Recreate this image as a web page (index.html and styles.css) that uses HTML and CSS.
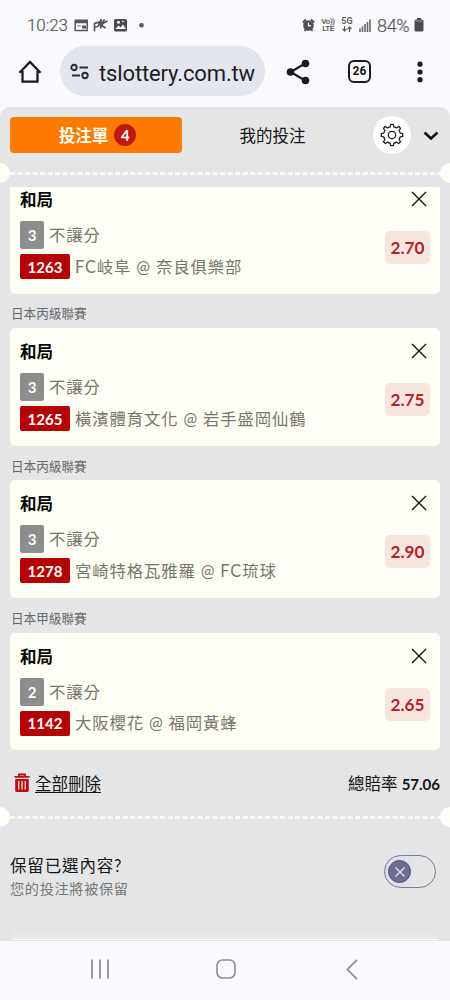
FILE: index.html
```html
<!DOCTYPE html>
<html lang="zh-Hant">
<head>
<meta charset="utf-8">
<title>投注單</title>
<link rel="stylesheet" href="styles.css">
</head>
<body>
<div class="phone">
  <header class="status">
    <span class="clock">10:23</span>
    <svg class="status-left" width="76" height="16" viewBox="0 0 76 16">
      <path d="M1.200 3.200h12v10.300h-12z" fill="none" stroke="#555558" stroke-width="1.500"/>
      <path d="M1 3h12.500v3.200H1zM8 8.500h4v3H8z" fill="#555558"/><path d="M3 9h4" stroke="#77777a"/>
      <path d="M20.500 14.500V6.500q4.500-2 4.500.8t-4.500 2.700" fill="none" stroke="#555558" stroke-width="1.700"/>
      <path d="M27 2l-.3 9.500M33.500 4q-4 1.500-6.500 4l4.500 3M27 7.500l3.500-5M25 4l2 4" fill="none" stroke="#555558" stroke-width="1.800"/>
      <rect x="40" y="2" width="13" height="12.500" rx="1.500" fill="#4b4b4e"/>
      <path d="M41.500 12l3-3.500 2 2L49 7.500l3 4.500z" fill="#faf9fe"/><circle cx="44.500" cy="5.300" r="1.500" fill="#faf9fe"/><path d="M49 3.500v2M48 4.500h2" stroke="#d0d0d3"/>
      <circle cx="67.500" cy="8.300" r="2.300" fill="#555558"/>
    </svg>
    <div class="status-right">
      <svg width="13" height="14" viewBox="0 0 13 14"><circle cx="6.500" cy="7.500" r="5.300" fill="#4f4f52"/><path d="M.8 4.500L4 1.500M12.200 4.500L9 1.500M2.500 13l1.500-2M10.500 13L9 11" stroke="#4f4f52" stroke-width="1.800"/><path d="M6.500 4.500v3.300h2.600" stroke="#faf9fe" stroke-width="1.200" fill="none"/></svg>
      <span class="net volte"><b>Vo))</b><b>LTE</b></span>
      <span class="net fiveg"><b>5G</b><svg width="10" height="6" viewBox="0 0 10 6"><path d="M2.500 0v5M.5 3l2 2 2-2M7.500 6V1M5.500 3l2-2 2 2" fill="none" stroke="#555558" stroke-width="1.100"/></svg></span>
      <svg class="signal" width="12" height="13" viewBox="0 0 12 13"><path d="M1 9.500V13M3.500 7.500V13M6 5V13M8.500 3V13M11 .5V13" stroke="#69696c" stroke-width="1.600"/></svg>
      <span class="percent">84%</span>
      <svg class="battery" width="10" height="14" viewBox="0 0 10 14"><path d="M3 0h4v1.500h1Q9.500 1.500 9.500 3v9q0 1.500-1.500 1.500H2Q.5 13.500.5 12V3Q.5 1.500 2 1.500h1z" fill="#4b4b4e"/><path d="M1.500 3h7" stroke="#a0a0a3"/></svg>
    </div>
  </header>

  <div class="browser-bar">
    <svg class="home" width="24" height="24" viewBox="0 0 24 24"><path d="M4.500 11v10.700h15V11M1.500 12.700L12 2l10.500 10.700" fill="none" stroke="#1b1b20" stroke-width="2.300"/></svg>
    <div class="address">
      <svg width="20" height="18" viewBox="0 0 20 18"><g fill="none" stroke="#2a2b31" stroke-width="1.900"><circle cx="4" cy="4.500" r="2.700"/><path d="M9.500 4.500H18M2 12.500h8"/><circle cx="15" cy="12.500" r="2.700"/></g></svg>
      <span>tslottery.com.tw</span>
    </div>
    <svg class="share" width="24" height="26" viewBox="0 0 24 26"><path d="M20 4L4.500 13 20 22" fill="none" stroke="#1b1b20" stroke-width="2.100"/><circle cx="19.500" cy="4.500" r="3.800" fill="#1b1b20"/><circle cx="4.500" cy="13" r="3.800" fill="#1b1b20"/><circle cx="19.500" cy="21.500" r="3.800" fill="#1b1b20"/></svg>
    <span class="tab-count">26</span>
    <svg class="more" width="6" height="22" viewBox="0 0 6 22"><g fill="#1b1b20"><circle cx="3" cy="3.200" r="2.600"/><circle cx="3" cy="11" r="2.600"/><circle cx="3" cy="18.700" r="2.600"/></g></svg>
  </div>

  <main class="sheet">
    <div class="tabs">
      <div class="tab active">投注單<span class="count">4</span></div>
      <div class="tab">我的投注</div>
      <div class="gear"><svg width="26" height="26" viewBox="0 0 26 26"><path fill="none" stroke="#222" stroke-width="1.300" stroke-linejoin="round" d="M11.200 4.800 L11.700 2.300H14.300L14.800 4.800Q16.300 5.200 17.500 5.900L19.700 4.500L21.500 6.300L20.100 8.500Q20.900 9.700 21.200 11.200L23.700 11.700V14.300L21.200 14.800Q20.900 16.300 20.100 17.500L21.500 19.700L19.700 21.500L17.500 20.100Q16.300 20.900 14.800 21.200L14.300 23.700H11.700L11.200 21.200Q9.700 20.900 8.500 20.100L6.300 21.500L4.500 19.700L5.900 17.500Q5.100 16.300 4.800 14.800L2.300 14.300V11.700L4.800 11.200Q5.100 9.700 5.900 8.500L4.500 6.300L6.300 4.500L8.500 5.900Q9.700 5.100 11.200 4.800Z"/><circle cx="13" cy="13" r="3.700" fill="none" stroke="#222" stroke-width="1.300"/></svg></div>
      <svg class="chevron" width="16" height="10" viewBox="0 0 16 10"><path d="M1.500 1.500L8 7.500l6.500-6" fill="none" stroke="#111" stroke-width="2.700"/></svg>
    </div>
    <div class="tear"><svg width="430" height="3" viewBox="0 0 430 3"><path d="M0 1.500H430" stroke="#fffef6" stroke-width="2.400" stroke-dasharray="5.200 2.300"/></svg></div>

    <section class="bets">
      <article class="card">
        <div class="card-head"><h2>和局</h2><svg class="close" width="16" height="16" viewBox="0 0 16 16"><path d="M1 1l14 14M15 1L1 15"/></svg></div>
        <div class="line market"><span class="num">3</span><span class="label">不讓分</span></div>
        <div class="line match"><span class="code">1263</span><span class="label">FC岐阜 @ 奈良俱樂部</span></div>
        <span class="odds">2.70</span>
      </article>
      <div class="league">日本丙級聯賽</div>
      <article class="card">
        <div class="card-head"><h2>和局</h2><svg class="close" width="16" height="16" viewBox="0 0 16 16"><path d="M1 1l14 14M15 1L1 15"/></svg></div>
        <div class="line market"><span class="num">3</span><span class="label">不讓分</span></div>
        <div class="line match"><span class="code">1265</span><span class="label">橫濱體育文化 @ 岩手盛岡仙鶴</span></div>
        <span class="odds">2.75</span>
      </article>
      <div class="league">日本丙級聯賽</div>
      <article class="card">
        <div class="card-head"><h2>和局</h2><svg class="close" width="16" height="16" viewBox="0 0 16 16"><path d="M1 1l14 14M15 1L1 15"/></svg></div>
        <div class="line market"><span class="num">3</span><span class="label">不讓分</span></div>
        <div class="line match"><span class="code">1278</span><span class="label">宮崎特格瓦雅羅 @ FC琉球</span></div>
        <span class="odds">2.90</span>
      </article>
      <div class="league">日本甲級聯賽</div>
      <article class="card">
        <div class="card-head"><h2>和局</h2><svg class="close" width="16" height="16" viewBox="0 0 16 16"><path d="M1 1l14 14M15 1L1 15"/></svg></div>
        <div class="line market"><span class="num">2</span><span class="label">不讓分</span></div>
        <div class="line match"><span class="code">1142</span><span class="label">大阪櫻花 @ 福岡黃蜂</span></div>
        <span class="odds">2.65</span>
      </article>
    </section>

    <div class="summary">
      <svg width="16" height="20" viewBox="0 0 16 20"><path d="M5 3V1.500h6V3M.5 3.800h15" fill="none" stroke="#b90d12" stroke-width="1.800"/><path d="M1.200 6h13.600v11.500q0 1.500-1.500 1.500H2.700q-1.500 0-1.500-1.500z" fill="#b90d12"/><path d="M4.700 8v8.500M8 8v8.500M11.300 8v8.500" stroke="#eed9da" stroke-width="1.300"/></svg>
      <span class="clear">全部刪除</span>
      <span class="total">總賠率 <b>57.06</b></span>
    </div>
    <div class="tear"><svg width="430" height="3" viewBox="0 0 430 3"><path d="M0 1.500H430" stroke="#fffef6" stroke-width="2.400" stroke-dasharray="5.200 2.300"/></svg></div>

    <div class="keep">
      <div><div class="keep-title">保留已選內容?</div><div class="keep-note">您的投注將被保留</div></div>
      <div class="toggle"><span class="knob"><svg width="12" height="12" viewBox="0 0 12 12"><path d="M1.500 1.500l9 9M10.500 1.500l-9 9" stroke="#e6e6f4" stroke-width="1.300"/></svg></span></div>
    </div>
    <div class="next-panel"></div>
  </main>

  <nav class="system-nav">
    <svg width="20" height="20" viewBox="0 0 20 20"><path d="M2 .5v19M10 .5v19M18 .5v19" stroke="#919195" stroke-width="1.800"/></svg>
    <svg width="20" height="20" viewBox="0 0 20 20"><rect x="1" y="1" width="18" height="18" rx="5.500" fill="none" stroke="#919195" stroke-width="1.700"/></svg>
    <svg width="12" height="21" viewBox="0 0 12 21"><path d="M11 .8L1.200 10.500 11 20.200" fill="none" stroke="#919195" stroke-width="1.800"/></svg>
  </nav>
</div>
</body>
</html>
```
FILE: styles.css
```css
* { box-sizing: border-box; }
body { margin: 0; background: #faf9fe; font-family: Lato, "Noto Sans CJK TC", sans-serif; color: #151515; }
svg { display: block; flex: none; }
.phone { width: 450px; height: 1000px; display: flex; flex-direction: column; overflow: hidden; }

.status { height: 46px; padding: 4px 25px 0 27px; display: flex; align-items: center; font-family: Roboto, sans-serif; color: #58585b; }
.clock { font-size: 17px; width: 41px; margin-right: 6px; font-weight: 300; -webkit-text-stroke: .2px #58585b; letter-spacing: -.1px; white-space: nowrap; }
.status-right { margin-left: auto; display: flex; align-items: center; }
.net { display: flex; flex-direction: column; align-items: center; font-size: 8px; line-height: 7px; font-weight: 600; }
.net b { font-weight: 600; }
.volte { width: 14px; margin-left: 6px; letter-spacing: -.4px; }
.fiveg { width: 12px; margin-left: 6px; gap: 1px; font-size: 9px; }
.signal { margin-left: 6px; }
.percent { width: 37px; margin-left: 6px; font-size: 18px; letter-spacing: -.3px; font-weight: 300; -webkit-text-stroke: .2px #58585b; }
.battery { margin-right: 1px; }

.browser-bar { height: 61px; padding-left: 18px; display: flex; align-items: flex-start; }
.home { margin-top: 14px; }
.address { width: 205px; height: 50px; margin: 0 0 0 18px; padding-left: 10px; border-radius: 25px; background: #e3e5ef; display: flex; align-items: center; font: 22px/50px Roboto, sans-serif; color: #1c1d24; }
.address span { margin-left: 9px; letter-spacing: -.13px; padding-top: 5px; }
.address svg { margin-top: 1px; }
.share { margin: 13px 0 0 21px; }
.tab-count { width: 23px; height: 23px; margin: 14px 0 0 38px; border: 2.400px solid #1b1b20; border-radius: 6px; font: 700 12px/19px Roboto, sans-serif; text-align: center; }
.more { margin: 15px 0 0 46px; }

.sheet { height: 834px; background: #e3e5e7; border-radius: 10px 10px 0 0; display: flex; flex-direction: column; overflow: hidden; }
.tabs { height: 56px; padding: 10px 10px 0; display: flex; align-items: flex-start; }
.tab { width: 172px; height: 36px; display: flex; align-items: center; justify-content: center; font-size: 16.500px; }
.tab + .tab { width: 181px; }
.tab.active { background: #ff7b00; color: #fffef2; border-radius: 4px; padding: 0 0 0 3px; font-weight: 700; }
.count { width: 22px; height: 22px; margin-left: 6px; border-radius: 50%; background: #bd1811; font-size: 15px; line-height: 22px; text-align: center; }
.gear { width: 38px; height: 38px; margin-top: -1px; border-radius: 50%; background: #fff; display: flex; align-items: center; justify-content: center; margin-left: 10px; }
.chevron { margin: 14px 0 0 12px; }
.tear { height: 20px; margin: 0 -10px; display: flex; align-items: center; justify-content: space-between; flex: none; }
.tear::before, .tear::after { content: ""; width: 20px; height: 20px; border-radius: 50%; background: #fffef6; flex: none; }

.bets { height: 567px; margin-top: 4px; padding: 0 10px; overflow: hidden; flex: none; }
.card { height: 117.500px; padding: 11px 10px 0; border-radius: 5px; background: #fffef4; display: grid; grid-template: 34px 33px 25px / 1fr 45px; }
.bets > .card:first-child { margin-top: -11px; }
.card-head { grid-column: 1 / 3; display: flex; justify-content: space-between; padding: 0 3px 0 0; }
.card-head h2 { margin: 0; padding-top: 1px; font-size: 16.500px; line-height: 24px; font-weight: 700; color: #050505; }
.close { margin-top: 4px; fill: none; stroke: #151515; stroke-width: 1.400; }
.line { grid-column: 1; display: flex; align-items: center; gap: 5px; font-size: 16.400px; letter-spacing: .85px; color: #777770; white-space: nowrap; }
.label { padding-bottom: 2px; }
.market { height: 28px; }
.match { height: 25px; }
.num, .code { display: flex; align-items: center; justify-content: center; border-radius: 2px; color: #fffef6; font-weight: 700; font-size: 15px; letter-spacing: 0; }
.num { width: 24px; height: 28px; background: #8d8d8d; }
.code { width: 50px; height: 25px; background: #b40004; }
.odds { grid-column: 2; grid-row: 2 / 4; height: 33px; margin-top: 10px; border-radius: 5px; background: #f6e6df; color: #b5252a; font-weight: 700; font-size: 17.200px; line-height: 33px; text-align: center; }
.league { height: 34.700px; padding: 4px 0 0 1px; display: flex; align-items: center; font-size: 12.600px; color: #68696b; }

.summary { height: 53px; padding: 15px 10px 0 14px; display: flex; align-items: flex-start; flex: none; font-size: 16.500px; line-height: 24px; }
.summary svg { margin-top: 4px; }
.clear { margin: 3px 0 0 5px; height: 23px; text-decoration: underline; text-underline-offset: 2px; }
.total { margin: 3px 0 0 auto; }
.total b { font-size: 15px; }
.keep { padding: 27px 14px 0 10px; display: flex; justify-content: space-between; }
.keep-title { font-size: 16.500px; line-height: 24px; letter-spacing: .85px; }
.keep-note { font-size: 14.200px; line-height: 22px; letter-spacing: .65px; color: #777879; }
.toggle { width: 52px; height: 33px; margin-top: 1px; padding-left: 3px; display: flex; align-items: center; border: 1.500px solid #777a8c; border-radius: 17px; background: linear-gradient(90deg, #dddff0 35%, #e3e5e7 60%); }
.knob { width: 23px; height: 23px; border: 1.500px solid #505475; border-radius: 50%; background: #6b6e8c; display: flex; align-items: center; justify-content: center; }
.next-panel { height: 12px; margin: auto 12px 1px; border-bottom: 1.500px solid #fff; background: linear-gradient(#e3e5e7, #e8e9eb); }

.system-nav { height: 59px; padding: 0 92px 3px 90px; display: grid; grid-template-columns: 126px 130px 12px; align-items: center; }
```
